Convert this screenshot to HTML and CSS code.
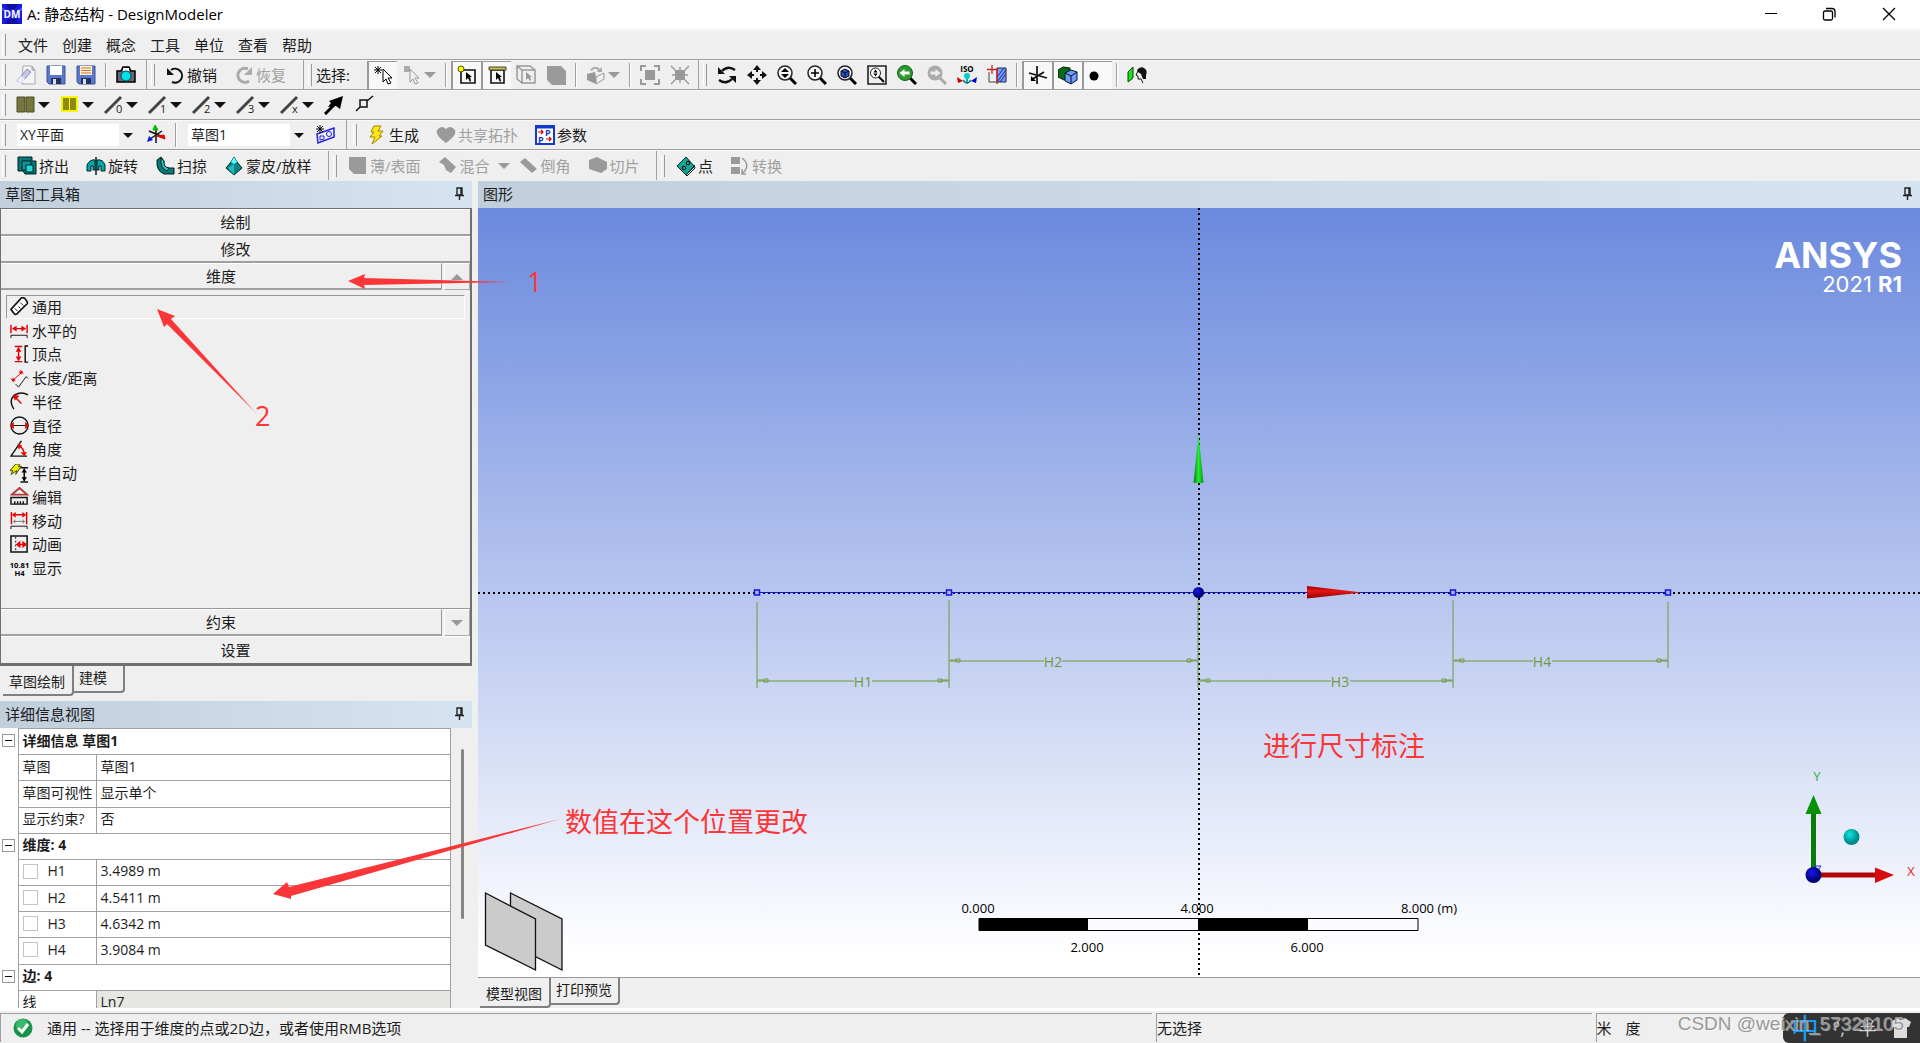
FILE: index.html
```html
<!DOCTYPE html>
<html lang="zh-CN">
<head>
<meta charset="utf-8">
<title>A: 静态结构 - DesignModeler</title>
<link rel="stylesheet" href="styles.css">
</head>
<body>
<header class="titlebar">
  <svg class="app-icon" viewBox="0 0 20 20"><rect width="20" height="20" fill="#1a1ae0"/><path d="M4 0h12l-3 5H7zM3 20l3-5h8l3 5z" fill="#1010a0"/><path d="M0 3l5 4H0zM20 3l-5 4h5z" fill="#3c50ff"/><text x="10" y="14" text-anchor="middle" class="app-mark">DM</text></svg>
  <h1>A: 静态结构 - DesignModeler</h1>
  <div class="window-buttons">
    <button aria-label="最小化"><svg viewBox="0 0 14 14"><path d="M1 6.500h12" stroke="#000" fill="none"/></svg></button>
    <button aria-label="还原"><svg viewBox="0 0 14 14" fill="none" stroke="#000" stroke-width="1.300"><rect x="1.500" y="4" width="9" height="9" rx="1.500"/><path d="M4 1.500h6q3 0 3 3v6"/></svg></button>
    <button aria-label="关闭"><svg viewBox="0 0 14 14"><path d="M1 1l12 12M13 1L1 13" stroke="#000" stroke-width="1.300"/></svg></button>
  </div>
</header>

<nav class="row menu" aria-label="菜单">
  <i class="grip"></i>
  <button>文件</button><button>创建</button><button>概念</button><button>工具</button><button>单位</button><button>查看</button><button>帮助</button>
</nav>

<div class="row">
  <div class="band band-file">
    <i class="grip"></i>
    <button class="ib" aria-label="新建"><svg viewBox="0 0 20 20"><path d="M7 1h9l3 4v14H6z" fill="#f4f4f4" stroke="#aaa"/><path d="M16 1v4h3" fill="#ccc" stroke="#999"/><path d="M1 16L11 4l4 3L6 17z" fill="#c4c8e8" stroke="#8a8fc0"/><path d="M1 16l4-5 4 3-3 4z" fill="#eef"/></svg></button>
    <button class="ib" aria-label="保存"><svg viewBox="0 0 20 20"><path d="M1 1h18v18H3l-2-2z" fill="#5a78cc" stroke="#3a549c"/><path d="M4 1h12v9H4z" fill="#fff"/><path d="M5 13h10v6H5z" fill="#23325c"/><path d="M7 14h3v5H7z" fill="#dde"/></svg></button>
    <button class="ib" aria-label="另存为"><svg viewBox="0 0 20 20"><path d="M1 1h18v18H3l-2-2z" fill="#5a78cc" stroke="#3a549c"/><path d="M4 1h12v9H4z" fill="#fff3cf"/><path d="M5 3h10M5 5.500h10M5 8h10" stroke="#d07030"/><path d="M5 13h10v6H5z" fill="#23325c"/><path d="M7 14h3v5H7z" fill="#dde"/></svg></button>
    <i class="sep"></i>
    <button class="ib" aria-label="截图"><svg viewBox="0 0 20 20"><path d="M1 6h4l2-4h6l2 4h4v11H1z" fill="#667" stroke="#000" stroke-width="1.500"/><path d="M7 3h6v3H7z" fill="#fff"/><circle cx="10" cy="11" r="5" fill="#00e0e8" stroke="#055"/></svg></button>
  </div>
  <div class="band band-undo">
    <i class="grip"></i>
    <button class="tb"><svg viewBox="0 0 20 20"><path d="M6 5a7 7 0 1 1 1 12" fill="none" stroke="#111" stroke-width="2"/><path d="M2 3v7h7z" fill="#111"/></svg>撤销</button>
    <button class="tb" disabled><svg viewBox="0 0 20 20"><path d="M14 4a7 7 0 1 0 1 12" fill="none" stroke="#aaa" stroke-width="3"/><path d="M18 2v8h-8z" fill="#aaa"/></svg>恢复</button>
  </div>
  <div class="band band-select">
    <i class="grip"></i>
    <span class="caption">选择:</span>
    <button class="ib on" aria-label="新选择"><svg viewBox="0 0 20 20"><path d="M5 1v8M1 5h8M2 2l6 6M8 2L2 8" stroke="#000"/><path d="M10 4v13l3-3 2 5 3-1-3-5h4z" fill="#fff" stroke="#000"/></svg></button>
    <button class="ib wide" disabled aria-label="选择模式"><svg viewBox="0 0 20 20"><path d="M2 1h6v6H2z" fill="#aaa"/><path d="M8 4v13l3-3 2 5 3-1-3-5h4z" fill="#eee" stroke="#999"/></svg><b class="arr"></b></button>
    <i class="sep"></i>
    <button class="ib on" aria-label="点"><svg viewBox="0 0 20 20"><path d="M4 5h14v13H4z" fill="none" stroke="#111" stroke-width="1.600"/><circle cx="4" cy="4" r="3" fill="#ff0" stroke="#550"/><path d="M9 7v8l2-2 2 4 1-1-1-4h2z" fill="#000"/></svg></button>
    <button class="ib on" aria-label="边"><svg viewBox="0 0 20 20"><path d="M4 5h13v13H4z" fill="none" stroke="#111" stroke-width="1.600"/><path d="M2 2h17v3H2z" fill="#c8c050" stroke="#443"/><path d="M9 7v8l2-2 2 4 1-1-1-4h2z" fill="#000"/></svg></button>
    <button class="ib" disabled aria-label="面"><svg viewBox="0 0 20 20" stroke="#999" stroke-width="1.500" fill="none"><path d="M1 1h13l5 4v13H6L1 14zM1 1l5 4h13M6 5v13"/><path d="M10 7v8l2-2 2 3 1-1-1-3h2z" fill="#999" stroke="none"/></svg></button>
    <button class="ib" disabled aria-label="体"><svg viewBox="0 0 20 20"><path d="M1 1h14l5 5v14H6l-5-5z" fill="#9a9a9a"/></svg></button>
    <i class="sep"></i>
    <button class="ib wide" disabled aria-label="扩展"><svg viewBox="0 0 20 20"><path d="M1 9l8-2 1 5v7l-9-4z" fill="#999"/><path d="M10 12l8-4v6l-8 5z" fill="#eee" stroke="#999"/><path d="M4 5q5-6 10-1l2-2v5h-5l1-2q-4-3-6 1z" fill="#aaa"/></svg><b class="arr"></b></button>
    <i class="sep"></i>
    <button class="ib" disabled aria-label="扩大选择"><svg viewBox="0 0 20 20"><path d="M5 5h10v10H5z" fill="#999"/><path d="M1 6V1h5M14 1h5v5M19 14v5h-5M6 19H1v-5" fill="none" stroke="#999" stroke-width="2"/></svg></button>
    <button class="ib" disabled aria-label="缩小选择"><svg viewBox="0 0 20 20"><path d="M5 5h10v10H5z" fill="#999"/><path d="M1 1l5 5M19 1l-5 5M19 19l-5-5M1 19l5-5M10 2v16M2 10h16" stroke="#999" stroke-width="1.400"/></svg></button>
  </div>
  <div class="band band-view">
    <i class="grip"></i>
    <button class="ib" aria-label="旋转"><svg viewBox="0 0 20 20"><path d="M5 6q6-6 13-1M15 14q-6 6-13 1" fill="none" stroke="#111" stroke-width="2.400"/><path d="M1 2v7h7zM19 18v-7h-7z" fill="#111"/></svg></button>
    <button class="ib" aria-label="平移"><svg viewBox="0 0 20 20"><path d="M10 3v4M10 13v4M3 10h4M13 10h4" stroke="#111" stroke-width="2"/><path d="M10 0l4 5H6zM10 20l4-5H6zM0 10l5-4v8zM20 10l-5-4v8z" fill="#111"/></svg></button>
    <button class="ib" aria-label="缩放"><svg viewBox="0 0 20 20"><path d="M13 13l6 6" stroke="#000" stroke-width="3"/><circle cx="8" cy="8" r="7" fill="#f8f8f8" stroke="#222" stroke-width="1.500"/><path d="M8 3l4 4H4zM8 13l4-4H4z"/></svg></button>
    <button class="ib" aria-label="放大"><svg viewBox="0 0 20 20"><path d="M13 13l6 6" stroke="#000" stroke-width="3"/><circle cx="8" cy="8" r="7" fill="#f8f8f8" stroke="#222" stroke-width="1.500"/><path d="M8 4v8M4 8h8" stroke="#000" stroke-width="1.600"/></svg></button>
    <button class="ib" aria-label="适合窗口"><svg viewBox="0 0 20 20"><path d="M13 13l6 6" stroke="#000" stroke-width="3"/><circle cx="8" cy="8" r="7" fill="#f8f8f8" stroke="#222" stroke-width="1.500"/><path d="M4 6l4-2 4 2v5l-4 2-4-2z" fill="#2850c0" stroke="#012"/><path d="M4 6l4 2 4-2M8 8v5" stroke="#012" fill="none"/></svg></button>
    <button class="ib" aria-label="放大窗口"><svg viewBox="0 0 20 20"><path d="M1 1h18v18H1z" fill="none" stroke="#222" stroke-width="1.600"/><path d="M11 11l6 6" stroke="#000" stroke-width="2"/><circle cx="8.500" cy="8" r="5" fill="#fff" stroke="#222"/><path d="M8.500 4.500l2 3h-4zM8.500 11.500l2-3h-4z"/></svg></button>
    <button class="ib" aria-label="上一视图"><svg viewBox="0 0 20 20"><path d="M13 13l6 6" stroke="#000" stroke-width="3"/><circle cx="8" cy="8" r="7.500" fill="#2c9a2c" stroke="#176017"/><path d="M2.500 8l5-4v2.500h5v3h-5V12z" fill="#fff"/></svg></button>
    <button class="ib" disabled aria-label="下一视图"><svg viewBox="0 0 20 20"><path d="M13 13l6 6" stroke="#aaa" stroke-width="3"/><circle cx="8" cy="8" r="7.500" fill="#aaa"/><path d="M13.500 8l-5-4v2.500h-5v3h5V12z" fill="#eee"/></svg></button>
    <button class="ib" aria-label="等轴测"><svg viewBox="0 0 20 20"><text x="10" y="7" text-anchor="middle" class="iso-mark">ISO</text><path d="M10 10v9M6 15q4 6 8 0" stroke="#008080" stroke-width="1.500" fill="none"/><circle cx="10" cy="11" r="3" fill="#0cc"/><path d="M0 12l6 4-5 2z" fill="#c00"/><path d="M20 12l-6 4 5 2z" fill="#00c"/></svg></button>
    <button class="ib" aria-label="正视于"><svg viewBox="0 0 20 20"><path d="M10 3h9v14h-9z" fill="#7a9cf0" stroke="#224"/><path d="M10 17l9-12M13 17l6-8M10 12l7-9" stroke="#1030a0"/><path d="M5 0v9M0 4.500h10M10 3v16" stroke="#c22" stroke-width="1.300"/><path d="M2 7v10h8" stroke="#444" fill="none"/></svg></button>
    <i class="sep"></i>
    <button class="ib on" aria-label="显示坐标轴"><svg viewBox="0 0 20 20"><path d="M9 1v18M1 8l18 5M16 7L3 15" stroke="#111" stroke-width="1.700"/><path d="M3 11v5h5z"/></svg></button>
    <button class="ib on" aria-label="显示模型"><svg viewBox="0 0 20 20"><path d="M0 5l5-3 7 1v10l-6 2-6-3z" fill="#0a6a18" stroke="#021"/><path d="M7 8l6-3 6 2v8l-6 4-6-3z" fill="#6f9cf4" stroke="#013"/><path d="M7 8l6 3 6-4M13 11v8" stroke="#013" fill="none"/></svg></button>
    <button class="ib on" aria-label="显示点"><svg viewBox="0 0 20 20"><circle cx="6" cy="11" r="4.500"/></svg></button>
    <i class="sep"></i>
    <button class="ib" aria-label="观察"><svg viewBox="0 0 20 20"><path d="M1 7l5-5v11l-5 4z" fill="#1ce01c" stroke="#040"/><path d="M10 5q3-4 7-2 4 2 2 7v4h-3q-1-2-2-5l-3-2z" fill="#111"/><path d="M11 6l-2 4 2 1v3h3l2 4" stroke="#111" fill="none"/></svg></button>
  </div>
</div>

<div class="row">
  <i class="grip"></i>
  <button class="lb" aria-label="面显示"><svg viewBox="0 0 20 20"><path d="M1 2h8v15H1zM10 2h8v15h-8z" fill="#75773f" stroke="#4c4e26"/></svg><b class="arr"></b></button>
  <button class="lb" aria-label="面显示黄色"><svg viewBox="0 0 20 20"><path d="M1 1h17v16H1z" fill="#f6f600"/><path d="M3 3h6v12H3zM10 3h6v12h-6z" fill="#8c8a10"/></svg><b class="arr"></b></button>
  <button class="lb" aria-label="边 0"><svg viewBox="0 0 20 20"><path d="M1 18L17 2" stroke="#444" stroke-width="3"/><text x="12" y="18" class="line-mark">0</text></svg><b class="arr"></b></button>
  <button class="lb" aria-label="边 1"><svg viewBox="0 0 20 20"><path d="M1 18L17 2" stroke="#444" stroke-width="3"/><text x="12" y="18" class="line-mark">1</text></svg><b class="arr"></b></button>
  <button class="lb" aria-label="边 2"><svg viewBox="0 0 20 20"><path d="M1 18L17 2" stroke="#444" stroke-width="3"/><text x="12" y="18" class="line-mark">2</text></svg><b class="arr"></b></button>
  <button class="lb" aria-label="边 3"><svg viewBox="0 0 20 20"><path d="M1 18L17 2" stroke="#444" stroke-width="3"/><text x="12" y="18" class="line-mark">3</text></svg><b class="arr"></b></button>
  <button class="lb" aria-label="边 x"><svg viewBox="0 0 20 20"><path d="M1 18L17 2" stroke="#444" stroke-width="3"/><text x="12" y="18" class="line-mark">x</text></svg><b class="arr"></b></button>
  <button class="ib" aria-label="方向"><svg viewBox="0 0 20 20"><path d="M1 19L12 8" stroke="#000" stroke-width="3"/><path d="M19 1l-3 13-4-3-8 1 3-4-2-2z"/></svg></button>
  <button class="ib" aria-label="顶点"><svg viewBox="0 0 20 20"><path d="M2 16l4-4M13 6l6-5M6 5h7v7H6z" stroke="#111" stroke-width="1.500" fill="none"/></svg></button>
</div>

<div class="row">
  <div class="band band-plane">
    <i class="grip"></i>
    <span class="drop"><select aria-label="平面"><option>XY平面</option></select></span>
    <button class="ib" aria-label="新平面"><svg viewBox="0 0 20 20"><path d="M10 4v14M3 6l14 6M4 14l12-8" stroke="#111" stroke-width="1.500"/><path d="M9 0l3 5H7z" fill="#0b0" stroke="#0b0"/><path d="M11 11l8 3-1-4z" fill="#e00" stroke="#e00"/><path d="M1 17l2-6 4 4z" fill="#11e"/></svg></button>
    <i class="sep"></i>
    <span class="drop second"><select aria-label="草图"><option>草图1</option></select></span>
    <button class="ib" aria-label="新草图"><svg viewBox="0 0 20 20"><path d="M2 9l17-6v9L3 18z" fill="none" stroke="#22d" stroke-width="1.500"/><circle cx="14" cy="9" r="2.500" fill="none" stroke="#22d"/><path d="M5 15v-4h4v3z" fill="none" stroke="#22d"/><path d="M5 0v8M1 4h8M2 1l6 6M8 1L2 7" stroke="#000"/></svg></button>
  </div>
  <div class="band band-generate">
    <i class="grip"></i>
    <button class="tb"><svg viewBox="0 0 20 20"><path d="M7 1h7l-3 5h5l-4 5h3L5 19l3-7H3l4-5H4z" fill="#ffe81a" stroke="#a08400"/></svg>生成</button>
    <button class="tb" disabled><svg viewBox="0 0 20 20"><path d="M10 18Q-3 9 2 4q4-4 8 0 4-4 8 0 5 5-8 14z" fill="#9a9a9a"/></svg>共享拓扑</button>
    <button class="tb"><svg viewBox="0 0 20 20"><path d="M1 1h18v18H1z" fill="#fff" stroke="#1438c8" stroke-width="2"/><path d="M1 2h18" stroke="#1438c8" stroke-width="3"/><path d="M3 7h5M6 5l2 2-2 2M11 14h5M14 12l2 2-2 2" stroke="#c00" fill="none" stroke-width="1.200"/><text x="10" y="11" class="p-mark">P</text><text x="3" y="18" class="p-mark">P</text></svg>参数</button>
  </div>
</div>

<div class="row last">
  <div class="band band-feature">
    <i class="grip"></i>
    <button class="tb"><svg viewBox="0 0 20 20"><path d="M1 1h14v4h4v13H8l-2-3H1z" fill="#087878" stroke="#022"/><path d="M5 5h9v9H5z" fill="#0a9a9a" stroke="#022"/><path d="M9 9h7v7H9z" fill="#2adada" stroke="#022"/></svg>挤出</button>
    <button class="tb"><svg viewBox="0 0 20 20"><path d="M1 15V9q3-6 8-5v10H7v-4H5v5zM11 4q6-1 8 5v6h-4v-5h-2v4h-2z" fill="#0aa" stroke="#022"/><path d="M10 1v18" stroke="#022" stroke-width="1.500"/></svg>旋转</button>
    <button class="tb"><svg viewBox="0 0 20 20"><path d="M2 4l4-3 3 4q-1 6 4 7h6v6H9Q1 15 2 4z" fill="#087878" stroke="#022"/><path d="M6 2l3 3q-1 6 5 7l-2 3Q5 12 6 2z" fill="#2cc" stroke="#022"/></svg>扫掠</button>
    <button class="tb"><svg viewBox="0 0 20 20"><path d="M10 1l3 5 5 6-8 7-8-7 5-6z" fill="#0a8484" stroke="#022"/><path d="M10 1l3 5-3 2-3-2z" fill="#5ff"/><path d="M10 8v11l-6-7z" fill="#2bb"/></svg>蒙皮/放样</button>
  </div>
  <div class="band band-solid">
    <i class="grip"></i>
    <button class="tb" disabled><svg viewBox="0 0 20 20"><path d="M1 1h17v17H6l-5-5z" fill="#9a9a9a"/></svg>薄/表面</button>
    <button class="tb has-menu" disabled><svg viewBox="0 0 20 20"><path d="M1 6l6-5 11 10-5 6-5-3-2-5z" fill="#9a9a9a"/></svg>混合<b class="arr"></b></button>
    <button class="tb" disabled><svg viewBox="0 0 20 20"><path d="M1 6l5-4 12 11-5 4z" fill="#9a9a9a"/></svg>倒角</button>
    <button class="tb" disabled><svg viewBox="0 0 20 20"><path d="M1 4l8-3 10 5v7l-6 4-12-4z" fill="#9a9a9a"/></svg>切片</button>
  </div>
  <div class="band band-point">
    <i class="grip"></i>
    <button class="tb"><svg viewBox="0 0 20 20"><path d="M1 10l9-9 8 9-8 9z" fill="#12a898" stroke="#022"/><path d="M10 19l8-8v-2l1 3-8 8z" fill="#fff" stroke="#022"/><circle cx="8" cy="12" r="1.800" fill="none" stroke="#000"/><circle cx="12" cy="7" r="1.800" fill="none" stroke="#000"/></svg>点</button>
    <button class="tb" disabled><svg viewBox="0 0 20 20"><path d="M1 1h9v7H1zM1 11h9v7H1z" fill="#9a9a9a"/><path d="M12 2q9 7 1 15M12 13v5h4" fill="none" stroke="#9a9a9a" stroke-width="1.500"/></svg>转换</button>
  </div>
</div>

<main class="workspace">
  <aside class="side">
    <section class="toolbox">
      <h2 class="pane-head">草图工具箱<svg class="pin" viewBox="0 0 9 14"><path d="M2 1h5v7H2zM0 8.500h9M4.500 9v4M6 1v7" fill="none" stroke="#222" stroke-width="1.400"/></svg></h2>
      <div class="stack">
        <button class="fold">绘制</button>
        <button class="fold">修改</button>
        <div class="fold-row"><button class="fold">维度</button><button class="scroll" aria-label="向上滚动"><b class="arr up"></b></button></div>
        <ul class="tools">
          <li><button class="current"><svg viewBox="0 0 20 20"><path d="M1 13L12 1q2-1 4 1l2 3q1 2-1 3L7 18q-2 1-3-1z" fill="#fff" stroke="#111" stroke-width="1.700"/><path d="M8 15l-3-3M11 12L9 10M14 9l-3-3" stroke="#111"/></svg>通用</button></li>
          <li><button><svg viewBox="0 0 20 20"><path d="M1 4v9M18 4v9M3 8h13" stroke="#d00" stroke-width="1.500"/><path d="M2 8l5-3v6zM17 8l-5-3v6z" fill="#e00"/><path d="M1 18v-3h17v3" stroke="#111" fill="none"/></svg>水平的</button></li>
          <li><button><svg viewBox="0 0 20 20"><path d="M5 1.500h8M5 17.500h8M9 3v13" stroke="#d00" stroke-width="1.500"/><path d="M9 2l3 5H6zM9 17l3-5H6z" fill="#e00"/><path d="M19 1h-3v17h3" stroke="#111" fill="none" stroke-width="1.500"/></svg>顶点</button></li>
          <li><button><svg viewBox="0 0 20 20"><path d="M1 10l3 4M11 1l3 4M3 12L13 3" stroke="#d00"/><path d="M2 13l1-4 3 3zM13 2l-1 4-3-3z" fill="#e00"/><path d="M6 16l3 3L17 8l2 2" stroke="#111" fill="none"/></svg>长度/距离</button></li>
          <li><button><svg viewBox="0 0 20 20"><path d="M4 18Q-2 9 5 3q7-4 14 0" stroke="#111" fill="none" stroke-width="1.500"/><path d="M5 5l7 7" stroke="#d00" stroke-width="1.500"/><path d="M3 3l7 1-5 5z" fill="#e00"/></svg>半径</button></li>
          <li><button><svg viewBox="0 0 20 20"><circle cx="10" cy="10" r="9" fill="none" stroke="#111" stroke-width="1.500"/><path d="M1 10h18" stroke="#111"/><path d="M0 10l4-4v8zM20 10l-4-4v8z" fill="#e00"/></svg>直径</button></li>
          <li><button><svg viewBox="0 0 20 20"><path d="M12 1L1 17h17" stroke="#111" fill="none" stroke-width="1.500"/><path d="M9 6q6 3 6 9" stroke="#d00" fill="none" stroke-width="1.500"/><path d="M8 4l5 2-4 4zM11 13h7l-3 4z" fill="#e00"/></svg>角度</button></li>
          <li><button><svg viewBox="0 0 20 20"><path d="M6 0L0 7h3l-2 4 6-4-1 4 6-9-3 1 1-3z" fill="#ee0" stroke="#440"/><path d="M11 4h8M11 19h8M15 5v13" stroke="#111" stroke-width="1.700"/><path d="M15 5l3 4h-6zM15 18l3-4h-6z"/></svg>半自动</button></li>
          <li><button><svg viewBox="0 0 20 20"><path d="M10 1l8 7H2z" fill="none" stroke="#b03838" stroke-width="2"/><path d="M1 11h17v7H1zM5 15v3M8 15v3M11 15v3M14 15v3" fill="none" stroke="#111" stroke-width="1.500"/></svg>编辑</button></li>
          <li><button><svg viewBox="0 0 20 20"><path d="M1.500 1v13M17.500 1v13M3 4h13" stroke="#d00" stroke-width="1.500"/><path d="M2 4l4-3v6zM17 4l-4-3v6z" fill="#e00"/><path d="M3 11h13M5 9v4M14 9v4" stroke="#777"/><path d="M1 19v-3h17v3" stroke="#111" fill="none"/></svg>移动</button></li>
          <li><button><svg viewBox="0 0 20 20"><path d="M1 1h17v17H1z" fill="none" stroke="#111" stroke-width="1.600"/><path d="M6 2v15" stroke="#111" stroke-dasharray="2 2"/><path d="M8 10h8" stroke="#d00" stroke-width="1.500"/><path d="M6 10l5-4v8zM18 10l-5-4v8z" fill="#e00"/></svg>动画</button></li>
          <li><button><svg viewBox="0 0 20 20"><text x="10" y="9" class="value-mark">10.81</text><text x="10" y="18" class="value-mark">H4</text></svg>显示</button></li>
        </ul>
        <div class="fold-row"><button class="fold">约束</button><button class="scroll" aria-label="向下滚动"><b class="arr"></b></button></div>
        <button class="fold">设置</button>
      </div>
      <div class="tabs"><button class="tab active">草图绘制</button><button class="tab">建模</button></div>
    </section>

    <section class="details">
      <h2 class="pane-head">详细信息视图<svg class="pin" viewBox="0 0 9 14"><path d="M2 1h5v7H2zM0 8.500h9M4.500 9v4M6 1v7" fill="none" stroke="#222" stroke-width="1.400"/></svg></h2>
      <div class="detail-body">
        <table>
          <colgroup><col class="c-gutter"><col class="c-name"><col></colgroup>
          <tr><td class="gutter"><button class="minus" aria-label="折叠"></button></td><th colspan="2">详细信息 草图1</th></tr>
          <tr><td class="gutter"></td><td>草图</td><td>草图1</td></tr>
          <tr><td class="gutter"></td><td>草图可视性</td><td>显示单个</td></tr>
          <tr><td class="gutter"></td><td>显示约束?</td><td>否</td></tr>
          <tr><td class="gutter"><button class="minus" aria-label="折叠"></button></td><th colspan="2">维度: 4</th></tr>
          <tr><td class="gutter"></td><td><label><input type="checkbox">H1</label></td><td>3.4989 m</td></tr>
          <tr><td class="gutter"></td><td><label><input type="checkbox">H2</label></td><td>4.5411 m</td></tr>
          <tr><td class="gutter"></td><td><label><input type="checkbox">H3</label></td><td>4.6342 m</td></tr>
          <tr><td class="gutter"></td><td><label><input type="checkbox">H4</label></td><td>3.9084 m</td></tr>
          <tr><td class="gutter"><button class="minus" aria-label="折叠"></button></td><th colspan="2">边: 4</th></tr>
          <tr><td class="gutter"></td><td>线</td><td class="readonly">Ln7</td></tr>
        </table>
        <div class="track"><i class="thumb"></i></div>
      </div>
    </section>
  </aside>

  <section class="graphics">
    <h2 class="pane-head">图形<svg class="pin" viewBox="0 0 9 14"><path d="M2 1h5v7H2zM0 8.500h9M4.500 9v4M6 1v7" fill="none" stroke="#222" stroke-width="1.400"/></svg></h2>
    <div class="view">
      <svg class="drawing" viewBox="478 208 1442 769">
        <defs>
          <radialGradient id="cyan" cx=".4" cy=".35"><stop offset="0" stop-color="#10e8e0"/><stop offset="1" stop-color="#008c90"/></radialGradient>
          <radialGradient id="blue" cx=".4" cy=".35"><stop offset="0" stop-color="#1818f0"/><stop offset="1" stop-color="#000078"/></radialGradient>
          <linearGradient id="green"><stop offset="0" stop-color="#0a7a14"/><stop offset=".5" stop-color="#22ee30"/><stop offset="1" stop-color="#089018"/></linearGradient>
          <linearGradient id="red" x2="0" y2="1"><stop offset="0" stop-color="#900"/><stop offset=".4" stop-color="#e81414"/><stop offset="1" stop-color="#800"/></linearGradient>
        </defs>
        <path class="axis" d="M478 593h1442M1199 208v769"/>
        <path d="M757 592.500h911" stroke="#1414cc"/>
        <g class="dim">
          <path d="M757 602v86M949 600v88M1198 600v88M1453 600v88M1668 602v66"/>
          <path d="M757 681h97M872 681h77M949 661h95M1062 661h136M1199 681h132M1350 681h103M1453 661h80M1552 661h116"/>
          <path d="M758 680h6M764 679h4v3h-4zM948 680h-6M942 679h-4v3h4zM950 660h6M956 659h4v3h-4zM1197 660h-6M1191 659h-4v3h4zM1200 680h6M1206 679h4v3h-4zM1452 680h-6M1446 679h-4v3h4zM1454 660h6M1460 659h4v3h-4zM1667 660h-6M1661 659h-4v3h4z"/>
          <text x="863" y="687">H1</text><text x="1053" y="667">H2</text><text x="1340" y="687">H3</text><text x="1542" y="667">H4</text>
        </g>
        <path d="M754.500 590h5v5h-5zM946.500 590h5v5h-5zM1450.500 590h5v5h-5zM1665.500 590h5v5h-5z" fill="#aab8f0" stroke="#1414e0" stroke-width="1.500"/>
        <circle cx="1198.500" cy="592.500" r="5.500" fill="url(#blue)"/>
        <path d="M1198.500 434l5 49h-10z" fill="url(#green)"/>
        <path d="M1307 586l55 6.500-55 6z" fill="url(#red)"/>
        <g fill="#cbcbcb" stroke="#111" stroke-width="1.300"><path d="M510.500 893l51.500 26v51l-51.500-26z"/><path d="M485.500 893l50 26v51l-50-25z"/></g>
        <g class="ruler">
          <path d="M979 918.500h439v12H979z" fill="#fafaff" stroke="#000"/>
          <path d="M979 918h109v13H979zM1198 918h110v13h-110z"/>
          <text x="978" y="913">0.000</text><text x="1197" y="913">4.000</text><text x="1429" y="913">8.000 (m)</text><text x="1087" y="952">2.000</text><text x="1307" y="952">6.000</text>
        </g>
        <g class="triad">
          <path d="M1811 812h5v60h-5z" fill="#0a7c0a"/><path d="M1813.500 795l8 19h-16z" fill="#089008"/>
          <path d="M1818 872.500h58v5h-58z" fill="#b00808"/><path d="M1875 867.500l19 7.500-19 8z" fill="#d80a0a"/>
          <path d="M1815 866h6l-3 4" fill="none" stroke="#22f"/>
          <circle cx="1813.500" cy="875" r="8" fill="url(#blue)"/><circle cx="1851.500" cy="837" r="8" fill="url(#cyan)"/>
          <text x="1817" y="781" fill="#22b83c">Y</text><text x="1911" y="876" fill="#e8202c">X</text>
        </g>
      </svg>
      <div class="logo"><strong>ANSYS</strong><span>2021 <b>R1</b></span></div>
    </div>
    <div class="tabs"><button class="tab active">模型视图</button><button class="tab">打印预览</button></div>
  </section>

  <svg class="notes" viewBox="0 181 1920 827" preserveAspectRatio="xMinYMin meet">
    <path d="M348 281l17-7-1 4 148 4-148 3 1 4z"/>
    <path d="M157 309l18 7-4 3 86 95-90-90-3 3z"/>
    <path d="M273 894l14-12 2 5 271-68-269 77v3z"/>
    <text x="527" y="292">1</text><text x="255" y="426">2</text>
    <text x="565" y="832">数值在这个位置更改</text><text x="1263" y="756">进行尺寸标注</text>
  </svg>
</main>

<footer class="status">
  <div class="cell message"><svg viewBox="0 0 20 20"><circle cx="10" cy="10" r="9.500" fill="#15944a"/><circle cx="9" cy="7" r="6" fill="#3cb86c"/><path d="M5 10l4 4 6-8" fill="none" stroke="#fff" stroke-width="3"/></svg>通用 -- 选择用于维度的点或2D边，或者使用RMB选项</div>
  <div class="cell pick">无选择</div>
  <div class="cell units"><span>米</span><span>度</span></div>
  <div class="ime"><span class="zh">中</span><span>°,</span><span>半</span><svg viewBox="0 0 22 22"><path d="M1 5l6-4q4 4 8 0l6 4-2 5h-2v11H4V10H2z" fill="#ddd"/></svg></div>
  <div class="watermark">CSDN @weixin_57326105</div>
</footer>
</body>
</html>
```
FILE: styles.css
```css
* { box-sizing: border-box; }

body {
  margin: 0;
  min-height: 100vh;
  display: flex;
  flex-direction: column;
  background: #efefef;
  color: #1c1c1c;
  font: 15px/20px "Open Sans", "Noto Sans CJK SC", sans-serif;
}

button, select, input { font: inherit; color: inherit; margin: 0; }
button { border: 0; padding: 0; background: none; white-space: nowrap; }
button:disabled { color: #a0a0a0; }
h1, h2 { margin: 0; font-size: 15px; font-weight: 400; }

/* title bar */
.titlebar { display: flex; align-items: center; height: 30px; padding: 0 0 2px 2px; gap: 5px; border-bottom: 1px solid #efefef; background: #fff; color: #000; }
.app-icon { width: 20px; height: 20px; }
.app-mark { font: bold 10px "Open Sans", sans-serif; fill: #fff; }
.window-buttons { display: flex; margin-left: auto; }
.window-buttons button { width: 58px; height: 27px; display: grid; place-items: center; }
.window-buttons button:last-child { width: 62px; }
.window-buttons svg { width: 14px; height: 14px; }

/* toolbars */
.row { display: flex; align-items: center; height: 30px; border-bottom: 1px solid #a0a0a0; box-shadow: inset 0 1px #f8f8f8; }
.row.last { height: 31px; border-bottom: 0; }
.grip { flex: none; width: 4px; height: 22px; margin: 0 5px 0 2px; border-left: 1px solid #fff; border-right: 1px solid #999; }
.band { display: flex; align-items: center; height: 29px; border-right: 1px solid #a0a0a0; margin-right: 2px; }
.band:last-child { border-right: 0; }
.band-file { width: 147px; }
.band-undo { width: 155px; }
.band-select { width: 393px; }
.band-plane { width: 347px; margin-right: 4px; }
.band-feature { width: 329px; }
.band-solid { width: 326px; }
.menu { gap: 14px; }
.menu .grip { margin-right: -2px; }
.sep { flex: none; width: 2px; height: 24px; margin: 0 4px; border-left: 1px solid #a0a0a0; border-right: 1px solid #fff; }
.ib { flex: none; width: 30px; height: 28px; display: flex; align-items: center; justify-content: center; }
.ib svg, .lb svg, .tb svg { width: 20px; height: 20px; flex: none; }
.ib.wide { width: 44px; gap: 2px; }
.ib.on { background: #f8f8f8; border-left: 2px solid #9a9a9a; border-top: 1px solid #9a9a9a; }
.lb { flex: none; width: 44px; display: flex; align-items: center; gap: 2px; padding-left: 5px; }
.arr { flex: none; border: 6px solid transparent; border-top-color: #111; border-bottom: 0; }
button:disabled .arr, .scroll .arr { border-top-color: #999; }
.arr.up { border-top: 0; border-bottom: 6px solid #999; }
.caption { width: 51px; margin-left: -1px; }
.tb { display: flex; align-items: center; gap: 2px; margin: 0 12px 0 5px; }
.tb .arr { margin-left: 6px; }
.tb.has-menu { margin-right: 4px; }
.row.last .grip { margin-right: 6px; }
.line-mark { font: 11px "Open Sans", sans-serif; fill: #222; }
.iso-mark { font: bold 8px "Open Sans", sans-serif; }
.p-mark { font: bold 9px "Open Sans", sans-serif; fill: #1438c8; }
.value-mark { font: bold 8px "Open Sans", sans-serif; text-anchor: middle; }
.drop { position: relative; display: block; width: 119px; margin: 0 5px 0 6px; }
.drop select { appearance: none; width: 100%; height: 22px; padding: 0 3px; border: 0; border-right: 17px solid #efefef; border-radius: 0; background: #fff; font-size: 14px; }
.drop::after { content: ""; position: absolute; right: 3px; top: 9px; border: 5px solid transparent; border-top-color: #111; border-bottom: 0; pointer-events: none; }
.drop.second { margin-left: 7px; margin-right: 3px; }

/* panes */
.workspace { position: relative; flex: 1; display: grid; grid-template-columns: 472px 1fr; gap: 6px; }
.side, .graphics, .toolbox, .details, .stack { display: flex; flex-direction: column; min-width: 0; }
.toolbox { flex: 1; }
.pane-head { display: flex; align-items: center; justify-content: space-between; height: 27px; padding: 0 8px 2px 5px; background: linear-gradient(90deg, #c1cfdd, #d6e3f0); }
.pin { width: 9px; height: 14px; }
.stack { flex: 1; border: solid #707070; border-width: 1px 2px 3px 1px; }
.fold { height: 27px; border-bottom: 2px solid #a0a0a0; border-top: 1px solid #fff; text-align: center; width: 100%; }
.stack > .fold:last-child { border-bottom: 0; }
.fold-row { display: flex; gap: 2px; }
.fold-row .fold { border-right: 1px solid #999; }
.scroll { flex: none; width: 26px; height: 27px; display: grid; place-items: center; border: 1px solid #aaa; border-top-color: #fff; border-left-color: #fff; }
.tools { flex: 1; display: grid; grid-template-rows: repeat(12, 1fr); list-style: none; margin: 0; padding: 5px 5px 28px 5px; border-bottom: 1px solid #999; }
.tools li { display: grid; }
.tools button { display: flex; align-items: center; gap: 3px; padding-left: 3px; text-align: left; border: 1px solid transparent; }
.tools button.current { border-color: #999 #fff #fff #999; }
.tools svg { width: 19px; height: 19px; }

.tabs { display: flex; align-items: flex-start; height: 35px; padding-left: 3px; font-size: 14px; line-height: 20px; }
.tab { height: 27px; padding: 0 16px 2px 5px; border: solid #808080; border-width: 0 2px 2px 0; border-radius: 0 0 4px 0; }
.tab.active { height: 30px; padding: 3px 7px 0 6px; }

.detail-body { display: grid; grid-template-columns: 1fr 21px; height: 280px; overflow: hidden; }
table { border-collapse: collapse; table-layout: fixed; width: 100%; height: 289px; background: #fff; font-size: 14px; line-height: 18px; }
.c-gutter { width: 18px; }
.c-name { width: 78px; }
td, th { height: 26px; padding: 0 3px 2px 4px; border: 1px solid #a0a0a0; text-align: left; white-space: nowrap; }
td.gutter { border-width: 0 1px 0 0; padding: 0 0 2px 2px; }
td.readonly { background: #e6e6e3; }
td label { display: flex; align-items: center; gap: 10px; }
input[type="checkbox"] { appearance: none; width: 15px; height: 15px; border: 1px solid #c4c4c4; background: #fff; }
.minus { display: grid; place-items: center; width: 13px; height: 13px; border: 1px solid #999; }
.minus::after { content: ""; width: 7px; height: 1px; background: #111; }
.track { padding: 21px 9px 0 10px; }
.thumb { display: block; width: 3px; height: 170px; border-radius: 2px; background: #858585; }

/* graphics */
.view { position: relative; flex: 1; background: linear-gradient(#6b89de, #fff 97%); }
.drawing { display: block; width: 100%; height: 100%; }
.axis { stroke: #000; stroke-width: 2; stroke-dasharray: 2 3; }
.dim { fill: none; stroke: #6e9a3c; stroke-width: 1; }
.dim text { fill: #6e9a3c; stroke: none; font: 14px "Open Sans", sans-serif; text-anchor: middle; }
.ruler text { font: 13px "Open Sans", sans-serif; text-anchor: middle; }
.triad text { font: 13px "Open Sans", sans-serif; text-anchor: middle; }
.logo { position: absolute; top: 30px; right: 18px; display: flex; flex-direction: column; align-items: flex-end; color: #fff; font-family: Inter, sans-serif; }
.logo strong { font-size: 36px; line-height: 35px; }
.logo span { font-size: 22px; line-height: 22px; }
.graphics .tabs { height: 31px; padding-left: 2px; border-top: 1px solid #999; }
.graphics .tab { padding-right: 6px; }
.graphics .tab.active { padding-right: 7px; }

.notes { position: absolute; left: 0; top: 0; width: 100%; height: 100%; pointer-events: none; fill: #fb3638; }
.notes text { font: 27px "Open Sans", "Noto Sans CJK SC", sans-serif; }

/* status bar */
.status { position: relative; display: flex; height: 35px; padding-top: 2px; gap: 4px; border-top: 3px solid #fff; }
.cell { display: flex; align-items: center; height: 29px; border-top: 1px solid #a0a0a0; border-left: 1px solid #a0a0a0; }
.message { flex: 1148; gap: 14px; padding-left: 12px; }
.message svg { width: 20px; height: 20px; }
.pick { flex: 438; }
.units { flex: 326; gap: 14px; }
.ime { position: absolute; right: 0; bottom: 0; display: flex; align-items: center; justify-content: space-between; width: 137px; height: 30px; padding: 0 8px; border-radius: 6px 0 0 6px; background: #333; color: #ccc; font-size: 18px; }
.ime .zh { color: #1a9cf0; font-size: 28px; }
.ime svg { width: 22px; height: 22px; }
.watermark { position: absolute; right: 16px; bottom: 7px; color: #999; font: 19px/24px "Liberation Sans", sans-serif; text-shadow: 1px 1px #fff8; }
```
